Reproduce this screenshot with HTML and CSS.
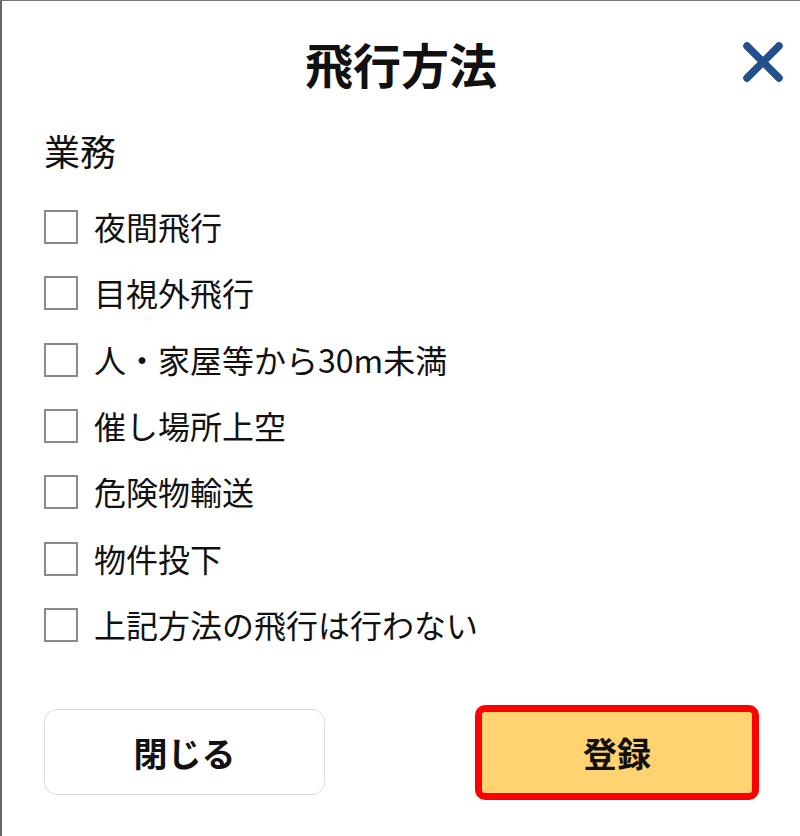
FILE: index.html
```html
<!DOCTYPE html>
<html lang="ja">
<head>
<meta charset="utf-8">
<title>飛行方法</title>
<link rel="stylesheet" href="styles.css">
</head>
<body>
<div class="modal">
  <header class="modal-header">
    <span></span>
    <h1 class="title">飛行方法</h1>
    <button class="close-x" aria-label="閉じる">
      <svg width="40" height="42" viewBox="0 0 40 42"><path d="M4 5 L36 37 M36 5 L4 37" stroke="#234f8c" stroke-width="7.5" stroke-linecap="round" fill="none"/></svg>
    </button>
  </header>
  <section class="content">
    <h2 class="section-title">業務</h2>
    <ul class="options">
      <li class="option"><span class="box"></span><span class="label">夜間飛行</span></li>
      <li class="option"><span class="box"></span><span class="label">目視外飛行</span></li>
      <li class="option"><span class="box"></span><span class="label">人・家屋等から30m未満</span></li>
      <li class="option"><span class="box"></span><span class="label">催し場所上空</span></li>
      <li class="option"><span class="box"></span><span class="label">危険物輸送</span></li>
      <li class="option"><span class="box"></span><span class="label">物件投下</span></li>
      <li class="option"><span class="box"></span><span class="label">上記方法の飛行は行わない</span></li>
    </ul>
  </section>
  <footer class="actions">
    <button class="btn btn-close">閉じる</button>
    <button class="btn btn-submit">登録</button>
  </footer>
</div>
</body>
</html>
```
FILE: styles.css
```css
* { box-sizing: border-box; }
html, body { margin: 0; padding: 0; background: #fff; }
body {
  font-family: "Noto Sans CJK JP", "Noto Sans", sans-serif;
  color: #111;
}
.modal {
  width: 800px;
  height: 836px;
  border-left: 2px solid #666;
  border-top: 1px solid #777;
  overflow: hidden;
}
.modal-header {
  display: grid;
  grid-template-columns: 1fr auto 1fr;
  align-items: center;
  padding: 38px 17px 0 17px;
}
.title {
  margin: 0;
  font-size: 48px;
  line-height: 48px;
  font-weight: 700;
  color: #111;
}
.close-x {
  justify-self: end;
  border: 0;
  background: none;
  padding: 0;
  width: 40px;
  height: 42px;
  margin-top: -3px;
}
.close-x svg { display: block; }
.content {
  padding: 0 0 0 42px;
}
.section-title {
  margin: 45px 0 0;
  font-size: 36px;
  line-height: 36px;
  font-weight: 400;
}
.options {
  list-style: none;
  margin: 42px 0 0;
  padding: 0;
  display: flex;
  flex-direction: column;
  gap: 32.33px;
}
.option {
  display: flex;
  align-items: center;
  gap: 16px;
  height: 34px;
}
.box {
  width: 34px;
  height: 34px;
  border: 2px solid #8a8a8a;
  background: #fff;
  flex: none;
}
.label {
  font-size: 32px;
  line-height: 32px;
  padding-bottom: 2px;
  color: #111;
}
.actions {
  display: flex;
  justify-content: space-between;
  align-items: center;
  padding: 0 41px 0 42px;
  margin-top: 63px;
}
.btn {
  font-family: "Noto Sans CJK JP", "Noto Sans", sans-serif;
  font-weight: 700;
  font-size: 34px;
  color: #111;
  display: flex;
  align-items: center;
  justify-content: center;
  padding: 0;
}
.btn-close {
  width: 281px;
  height: 86px;
  border: 1px solid #dcdcdc;
  border-radius: 13px;
  background: #fff;
}
.btn-submit {
  width: 284px;
  height: 95px;
  border: 7px solid #ff0000;
  border-radius: 10px;
  background: #ffd470;
}
```
